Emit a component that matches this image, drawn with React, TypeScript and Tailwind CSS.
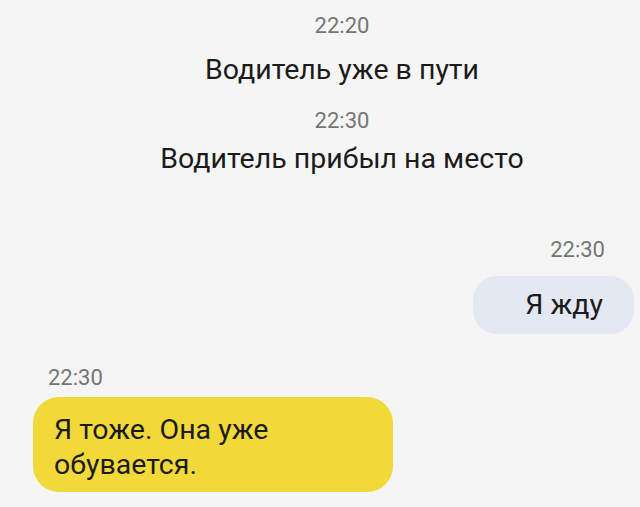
export default function App() {
  return (
    <div className="w-[640px] h-[507px] overflow-hidden bg-[#f5f5f5] text-[#1b1b1b] font-['Roboto',sans-serif]">
      {/* системные сообщения */}
      <div className="flex flex-col items-center pl-[44px] pt-[13px]">
        <div className="text-[22px] leading-[26px] text-[#757575]">22:20</div>
        <div className="mt-[14px] text-[28.5px] leading-[34px]">Водитель уже в пути</div>
        <div className="mt-[21px] text-[22px] leading-[26px] text-[#757575]">22:30</div>
        <div className="mt-[8px] text-[28.5px] leading-[34px]">Водитель прибыл на место</div>
      </div>

      {/* моё сообщение */}
      <div className="flex flex-col items-end pr-[6px] mt-[61px]">
        <div className="mr-[29px] text-[22px] leading-[26px] text-[#757575]">22:30</div>
        <div className="mt-[13px] w-[161px] h-[58px] rounded-[24px] bg-[#e4e8f3] flex justify-end pt-[12px] pr-[31px] text-[28.5px] leading-[34px]">
          Я жду
        </div>
      </div>

      {/* ответ водителя */}
      <div className="flex flex-col items-start pl-[33px] mt-[31px]">
        <div className="ml-[15px] text-[22px] leading-[26px] text-[#757575]">22:30</div>
        <div className="mt-[6px] w-[360px] rounded-[26px] bg-[#f2d93a] pl-[21px] pr-4 pt-[15px] pb-[10px] text-[28.5px] leading-[35px]">
          Я тоже. Она уже
          <br />
          обувается.
        </div>
      </div>
    </div>
  )
}
